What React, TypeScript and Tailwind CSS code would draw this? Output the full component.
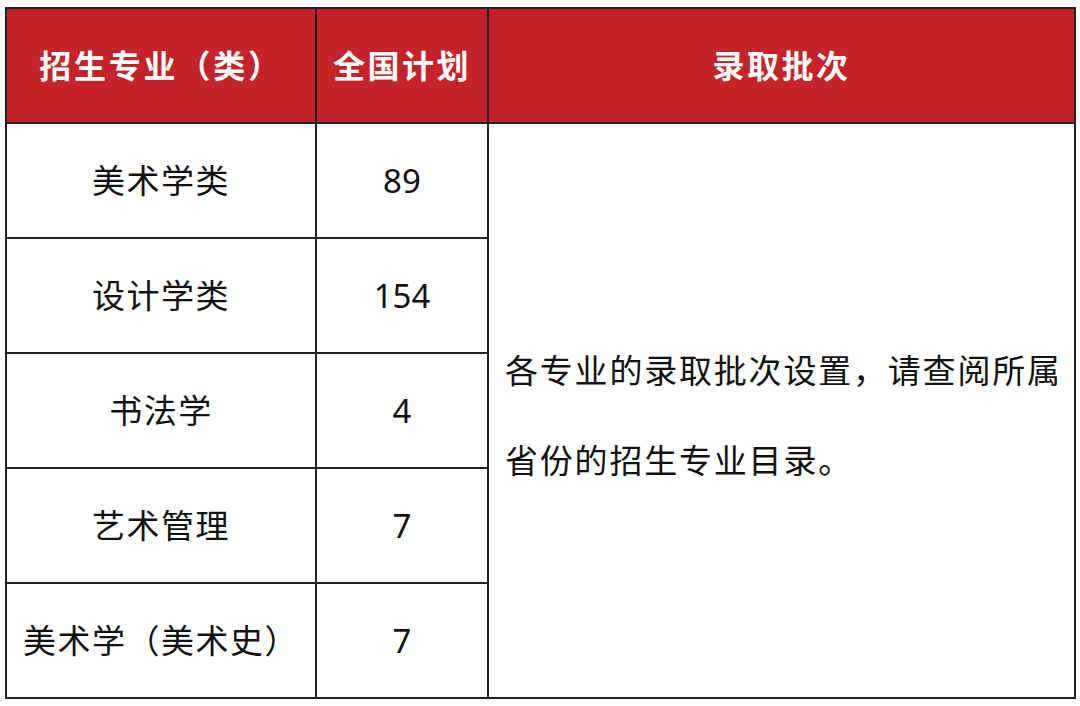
const rows = [
  { name: "美术学类", plan: "89" },
  { name: "设计学类", plan: "154" },
  { name: "书法学", plan: "4" },
  { name: "艺术管理", plan: "7" },
  { name: "美术学（美术史）", plan: "7" },
];

const font = { fontFamily: '"Noto Sans", "Noto Sans CJK SC", sans-serif' };

export default function App() {
  return (
    <div className="w-[1080px] h-[706px] bg-white pt-[7px] pl-[5px]" style={font}>
      <div className="grid w-[1071px] grid-cols-[310px_172px_587px] grid-rows-[115px_repeat(5,115px)] border-l-2 border-t-2 border-[#222]">
        {/* header */}
        <div className="flex items-center justify-center bg-[#c5232a] border-r-2 border-b-2 border-[#222] text-white font-bold text-[32px] tracking-[2.8px]">
          招生专业（类）
        </div>
        <div className="flex items-center justify-center bg-[#c5232a] border-r-2 border-b-2 border-[#222] text-white font-bold text-[32px] tracking-[2.5px]">
          全国计划
        </div>
        <div className="flex items-center justify-center bg-[#c5232a] border-r-2 border-b-2 border-[#222] text-white font-bold text-[32px] tracking-[2.5px]">
          录取批次
        </div>

        {rows.map((r, i) => (
          <div key={r.name} className="contents">
            <div className="flex items-center justify-center border-r-2 border-b-2 border-[#222] text-[#111] text-[33px] tracking-[1.5px]">
              {r.name}
            </div>
            <div className="flex items-center justify-center border-r-2 border-b-2 border-[#222] text-[#111] text-[33px]">
              {r.plan}
            </div>
            {i === 0 && (
              <div className="row-span-5 flex items-center border-r-2 border-b-2 border-[#222] pl-[16px] pt-[10px] text-[#111] text-[33px] tracking-[1.8px] leading-[90px]">
                <p>
                  各专业的录取批次设置，请查阅所属
                  <br />
                  省份的招生专业目录。
                </p>
              </div>
            )}
          </div>
        ))}
      </div>
    </div>
  );
}
